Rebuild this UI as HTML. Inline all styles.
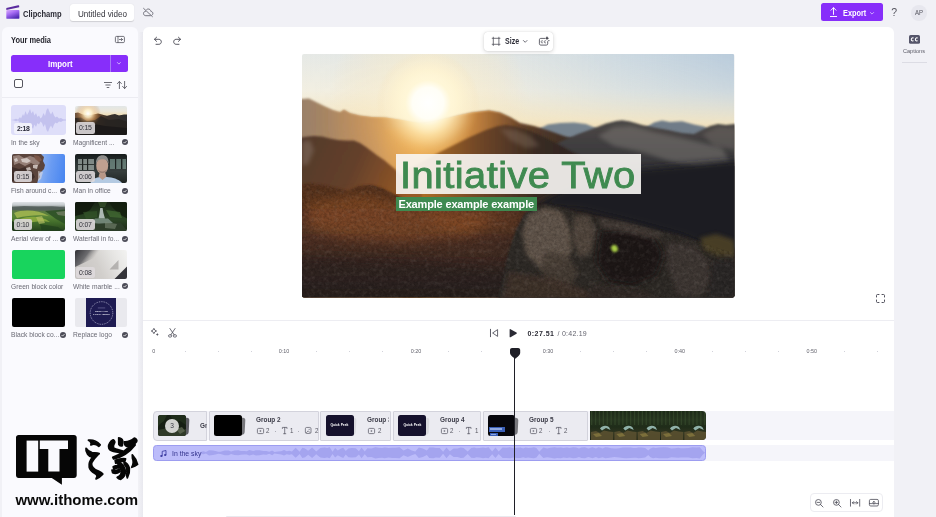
<!DOCTYPE html>
<html>
<head>
<meta charset="utf-8">
<title>Clipchamp</title>
<style>
*{box-sizing:border-box;margin:0;padding:0}
html,body{width:936px;height:517px;overflow:hidden}
body{will-change:transform;background:#f1f1f6;font-family:"Liberation Sans",sans-serif;color:#222;position:relative}
.abs{position:absolute}
.t{position:absolute;white-space:nowrap;line-height:1}
svg{position:absolute;overflow:visible}
/* panels */
#side{left:2px;top:26.5px;width:136px;height:495px;background:#fafafe;border-radius:6px 6px 0 0}
#main{left:143px;top:26.5px;width:751px;height:495px;background:#fff;border-radius:6px 6px 0 0}
/* top bar */
#title{left:70.4px;top:4px;width:63.8px;height:17.2px;background:#fff;border-radius:3px;box-shadow:0 .6px 1px rgba(0,0,0,.14)}
#export{left:820.8px;top:3.3px;width:62px;height:18.1px;background:#872efa;border-radius:2.5px}
#avatar{left:911px;top:5px;width:15.5px;height:15.5px;border-radius:50%;background:#e7e7ee}
/* import */
#import{left:11px;top:54.5px;width:117.1px;height:17.5px;background:#872efa;border-radius:2.5px}
#importdiv{left:110px;top:54.5px;width:1px;height:17.5px;background:#a77bf6}
#chk{left:14.4px;top:79.2px;width:9px;height:9.2px;border:1px solid #55555f;border-radius:2px;background:#fff}
#sdiv{left:2px;top:96.5px;width:135.5px;height:1px;background:#ececf2}
/* media */
.th{position:absolute;height:29.5px;border-radius:2px;overflow:hidden}
.lbl{position:absolute;white-space:nowrap;font-size:7.3px;line-height:1;color:#6a6a74}
.dur{position:absolute;left:1.4px;bottom:.7px;width:18.4px;height:11.6px;border-radius:2.2px;background:rgba(222,217,220,.9);font-size:6.9px;line-height:12px;color:#33333b;text-align:center;letter-spacing:-.15px}
.ck{position:absolute;width:6px;height:6px;border-radius:50%;background:#4c4c58}
</style>
</head>
<body>
<!-- ======= top bar ======= -->
<div class="abs" id="title"></div>
<div class="t" style="left:23.4px;top:9.7px;font-size:9px;font-weight:bold;color:#2b2b35;transform:scaleX(.84);transform-origin:0 0" id="brand">Clipchamp</div>
<div class="t" style="left:78px;top:9.5px;font-size:8.6px;color:#33333b;transform:scaleX(.94);transform-origin:0 0" id="utitle">Untitled video</div>
<div class="abs" id="export"></div>
<div class="t" style="left:842.7px;top:9.3px;font-size:9px;font-weight:bold;color:#fff;transform:scaleX(.815);transform-origin:0 0" id="exporttxt">Export</div>
<div class="t" style="left:891.2px;top:7.1px;font-size:10.5px;color:#55555f" id="help">?</div>
<div class="abs" id="avatar"></div>
<div class="t" style="left:914.9px;top:9.5px;font-size:6.8px;color:#55555f;transform:scaleX(.89);transform-origin:0 0" id="ap">AP</div>

<!-- ======= panels ======= -->
<div class="abs" style="left:138px;top:32px;width:5.5px;height:490px;background:linear-gradient(90deg,#f2f2f7,#e7e7ed)"></div>
<div class="abs" id="side"></div>
<div class="abs" id="main"></div>

<!-- ======= sidebar content ======= -->
<div class="t" style="left:11px;top:36.3px;font-size:8.6px;font-weight:bold;color:#26262e;transform:scaleX(.866);transform-origin:0 0" id="yourmedia">Your media</div>
<div class="abs" id="import"></div>
<div class="abs" id="importdiv"></div>
<div class="t" style="left:48.4px;top:59.6px;font-size:8.6px;font-weight:bold;color:#fff;transform:scaleX(.924);transform-origin:0 0" id="importtxt">Import</div>
<div class="abs" id="chk"></div>
<div class="abs" id="sdiv"></div>

<!-- ICONS-START -->
<svg style="left:5.6px;top:5px" width="14" height="14" viewBox="0 0 14 14"><defs><linearGradient id="lg1" x1="0" y1="0" x2=".6" y2="1"><stop offset="0" stop-color="#dcb0fa"/><stop offset=".45" stop-color="#a66cf4"/><stop offset="1" stop-color="#4f2bb4"/></linearGradient></defs><path d="M.3 3 L12.2 .3 C12.8 .2 13.2 .5 13.2 1 V2.2 L.3 5Z" fill="#5a2a9e"/><rect x=".3" y="4.9" width="13.1" height="8.9" rx=".9" fill="url(#lg1)"/></svg>
<svg style="left:143px;top:8px" width="10.4" height="9" viewBox="0 0 10.4 9"><path d="M2.6 3.2 C1.4 3.4 .5 4.3 .5 5.5 C.5 6.8 1.5 7.7 2.8 7.7 H7.4 M8.9 7.2 C9.6 6.8 9.9 6.1 9.9 5.5 C9.9 4.3 9 3.5 7.9 3.4 C7.7 2 6.6 1 5.2 1 C4.6 1 4.1 1.2 3.7 1.5" fill="none" stroke="#60606a" stroke-width=".85" stroke-linecap="round"/><path d="M.6 .4 L9.4 8.6" stroke="#60606a" stroke-width=".85" stroke-linecap="round"/></svg>
<svg style="left:830.2px;top:7.4px" width="7" height="10" viewBox="0 0 7 10"><path d="M3.5 7.4 V.8 M1 3.2 L3.5 .7 L6 3.2 M.4 9.5 H6.6" fill="none" stroke="#fff" stroke-width=".95" stroke-linecap="round" stroke-linejoin="round"/></svg>
<svg style="left:870.2px;top:11.6px" width="4" height="2.8" viewBox="0 0 4 2.8"><path d="M.4 .5 L2 2.1 3.6 .5" fill="none" stroke="#e4d4ff" stroke-width=".75" stroke-linecap="round" stroke-linejoin="round"/></svg>
<svg style="left:114.6px;top:36.2px" width="9.8" height="7" viewBox="0 0 9.8 7"><rect x=".4" y=".4" width="9" height="6.2" rx="1.1" fill="none" stroke="#50505a" stroke-width=".8"/><path d="M3 .4 V6.6 M4.4 3.5 H7.4 M6.3 2.3 L7.5 3.5 L6.3 4.7" fill="none" stroke="#50505a" stroke-width=".75" stroke-linecap="round" stroke-linejoin="round"/></svg>
<svg style="left:117.4px;top:62.4px" width="3.8" height="2.8" viewBox="0 0 3.8 2.8"><path d="M.4 .5 L1.9 2.1 3.4 .5" fill="none" stroke="#e4d4ff" stroke-width=".75" stroke-linecap="round" stroke-linejoin="round"/></svg>
<svg style="left:104.2px;top:81.6px" width="8" height="6" viewBox="0 0 8 6"><path d="M.4 .5 H7.6 M1.8 3 H6.2 M3.1 5.5 H4.9" fill="none" stroke="#50505a" stroke-width=".85" stroke-linecap="round"/></svg>
<svg style="left:117px;top:80.6px" width="10" height="8" viewBox="0 0 10 8"><path d="M2.4 7.6 V.6 M.4 2.6 L2.4 .5 L4.4 2.6 M7.6 .4 V7.4 M5.6 5.4 L7.6 7.5 L9.6 5.4" fill="none" stroke="#50505a" stroke-width=".85" stroke-linecap="round" stroke-linejoin="round"/></svg>
<!-- ICONS-END -->
<!-- MEDIA GRID -->
<div class="th" style="left:10.8px;top:104.89999999999999px;width:55.3px;height:29.9px;background:#dedef9;border-radius:3px"><svg width="55.5" height="30" viewBox="0 0 55.5 30"><path d="M0 15 L3 14.6 5 13.8 7 14.5 9 12 10 13.5 12 9 13 11 14.5 6 16 10 17.5 7.5 19 4 20.5 8.5 22 6 23.5 10.5 25 8 26.5 12 28 10.5 29.5 13.5 31 12 32.5 8 34 11 35.5 5 37 3 38.5 7 40 9.5 41.5 6.5 43 10.5 44.5 12.5 46 11.5 48 13.5 50 13 52 14.3 55.5 14.6 55.5 15.4 52 15.7 50 17 48 16.5 46 18.5 44.5 17.5 43 19.5 41.5 23.5 40 20.5 38.5 23 37 27 35.5 25 34 19 32.5 22 31 18 29.5 16.5 28 19.5 26.5 18 25 22 23.5 19.5 22 24 20.5 21.5 19 26 17.5 22.5 16 20 14.5 24 13 19 12 21 10 16.5 9 18 7 15.5 5 16.2 3 15.4 0 15Z" fill="#c3c2ee"/></svg>
<div class="dur" style="left:3.6px;bottom:.7px;width:17.7px;height:11.2px;background:#f1f1fb;font-weight:bold;color:#2b2b3a;letter-spacing:-.35px">2:18</div>
</div>
<div class="lbl" style="left:10.8px;top:138.7px;transform:scaleX(.915);transform-origin:0 0">In the sky</div>
<div class="ck" style="left:60px;top:139.2px"><svg width="6" height="6" viewBox="0 0 6 6"><path d="M1.6 3.1 L2.6 4.1 4.5 2.1" fill="none" stroke="#fff" stroke-width=".8"/></svg></div>
<div class="th" style="left:74.8px;top:105.5px;width:52.4px;height:29.2px;background:transparent;border-radius:2px"><div class="abs" style="inset:0;background:linear-gradient(180deg,#e2e6e7 0%,#ece8da 18%,#f0dfba 30%,#3a302a 42%,#1f1d1c 100%)"></div><svg width="53" height="30" viewBox="0 0 53 30"><defs><radialGradient id="ms" cx="13" cy="7.5" r="13" gradientUnits="userSpaceOnUse"><stop offset="0" stop-color="#fff" stop-opacity="1"/><stop offset=".3" stop-color="#fff0c8" stop-opacity=".85"/><stop offset=".65" stop-color="#e8b070" stop-opacity=".35"/><stop offset="1" stop-color="#a05a20" stop-opacity="0"/></radialGradient><linearGradient id="mm" x1="0" y1="0" x2="53" y2="0" gradientUnits="userSpaceOnUse"><stop offset="0" stop-color="#6a5240"/><stop offset=".3" stop-color="#8a5a2e"/><stop offset=".6" stop-color="#3a302a"/><stop offset="1" stop-color="#2c2c2e"/></linearGradient></defs><path d="M0 7 L3 6.5 8 8.5 13 9.5 18 8.5 23 7.5 27 8.5 32 10 37 8.6 40 8 44 9.5 49 8.4 53 8.6 53 30 0 30Z" fill="url(#mm)"/><path d="M0 12 L6 11.5 12 15 20 14 26 10 34 14 44 13 53 16 53 30 0 30Z" fill="#262220" opacity=".85"/><path d="M0 18 L14 17 30 20 53 22 53 30 0 30Z" fill="#1a1817" opacity=".85"/><rect width="53" height="30" fill="url(#ms)"/></svg>
<div class="dur">0:15</div>
</div>
<div class="lbl" style="left:73.1px;top:138.7px;transform:scaleX(.915);transform-origin:0 0">Magnificent ...</div>
<div class="ck" style="left:122.3px;top:139.2px"><svg width="6" height="6" viewBox="0 0 6 6"><path d="M1.6 3.1 L2.6 4.1 4.5 2.1" fill="none" stroke="#fff" stroke-width=".8"/></svg></div>
<div class="th" style="left:12.3px;top:153.79999999999998px;width:52.4px;height:29.2px;background:transparent;border-radius:2px"><div class="abs" style="inset:0;background:linear-gradient(100deg,#a9c2ea 0%,#9bbcf0 45%,#6b9cf2 70%,#4684f0 100%)"></div><svg width="53" height="30" viewBox="0 0 53 30"><path d="M0 0 L29 0 32 3 31 7 33 11 32 15 29 18 27 20 28 23 26 26 25 30 0 30Z" fill="#5b443c"/><path d="M1 2 L7 1 12 4 18 2 24 4 28 9 25 12 19 9 13 12 7 9 2 11Z" fill="#a48f86" opacity=".8"/><path d="M0 13 L7 15 13 13 20 17 23 23 19 27 10 25 4 28 0 27Z" fill="#3c2c28" opacity=".9"/><path d="M9 5 L15 4 19 7 15 9 10 8Z M2 5 L5 4 6 7 3 8Z M21 11 L26 11 25 15 21 14Z M14 14 L18 13 19 16 15 17Z" fill="#e4dcd8" opacity=".75"/><path d="M22 1 L27 2 30 6 27 8 23 5Z" fill="#7e5a4a" opacity=".9"/><path d="M26 17 L31 18 29 25 26 27Z" fill="#e6dfdc" opacity=".55"/><path d="M4 17 L9 18 8 22 4 21Z M14 20 L18 21 17 24 13 23Z" fill="#8a6a5c" opacity=".8"/></svg>
<div class="dur">0:15</div>
</div>
<div class="lbl" style="left:10.8px;top:187.0px;transform:scaleX(.915);transform-origin:0 0">Fish around c...</div>
<div class="ck" style="left:60px;top:187.5px"><svg width="6" height="6" viewBox="0 0 6 6"><path d="M1.6 3.1 L2.6 4.1 4.5 2.1" fill="none" stroke="#fff" stroke-width=".8"/></svg></div>
<div class="th" style="left:74.8px;top:153.79999999999998px;width:52.4px;height:29.2px;background:transparent;border-radius:2px"><div class="abs" style="inset:0;background:linear-gradient(180deg,#161b1b 0%,#2a3232 30%,#363d3c 60%,#202524 100%)"></div><svg width="53" height="30" viewBox="0 0 53 30"><rect x="3" y="5" width="16" height="11" fill="#b9c4c0" opacity=".6"/><rect x="7" y="5" width="1.2" height="11" fill="#1d2221"/><rect x="12" y="5" width="1.2" height="11" fill="#1d2221"/><rect x="3" y="10" width="16" height="1" fill="#1d2221" opacity=".8"/><rect x="35" y="5" width="16" height="10" fill="#8fb0a6" opacity=".55"/><rect x="40" y="5" width="1.2" height="10" fill="#1d2221"/><rect x="46" y="5" width="1.4" height="10" fill="#1d2221"/><path d="M15 30 C17 25 21 23.5 25 23 L32 23 C38 23.5 44 25 48 30Z" fill="#b4cae2"/><path d="M23.5 22.5 L27.5 26 31.5 22.5 30 18 25 18Z" fill="#b89888"/><ellipse cx="27.2" cy="11.8" rx="6" ry="8.2" fill="#c0a090"/><path d="M21 10.5 C20.6 3.2 24.2 1.2 27.5 1.2 C31.2 1.2 34 3.5 33.5 10.5 C33 6.8 31 5.2 27.4 5.2 C23.8 5.2 21.7 6.8 21 10.5Z" fill="#8e8d8b"/><path d="M22.8 15 C24.2 20.8 30.4 20.8 31.8 15 C30.6 18.2 24.2 18.2 22.8 15Z" fill="#9a8074"/></svg>
<div class="dur">0:06</div>
</div>
<div class="lbl" style="left:73.1px;top:187.0px;transform:scaleX(.915);transform-origin:0 0">Man in office</div>
<div class="ck" style="left:122.3px;top:187.5px"><svg width="6" height="6" viewBox="0 0 6 6"><path d="M1.6 3.1 L2.6 4.1 4.5 2.1" fill="none" stroke="#fff" stroke-width=".8"/></svg></div>
<div class="th" style="left:12.3px;top:201.79999999999998px;width:52.4px;height:29.2px;background:transparent;border-radius:2px"><div class="abs" style="inset:0;background:linear-gradient(180deg,#dfe2e6 0%,#c3c9cc 11%,#5c6660 20%,#5a7a44 32%,#588436 50%,#406a2a 72%,#27431e 100%)"></div><svg width="53" height="30" viewBox="0 0 53 30" style="filter:blur(.45px)"><path d="M0 5 L12 4 26 4.6 40 4.2 53 5.5 53 9 0 8Z" fill="#555f5c" opacity=".85"/><path d="M2 11 C12 7 26 8 37 14 C30 12.5 16 13 5 16Z" fill="#a5b850" opacity=".85"/><path d="M8 17 C18 13.5 30 14 38 20 C31 18.5 22 19 13 22Z" fill="#94b040" opacity=".8"/><path d="M24 15 L30 14 33 21 27 22Z" fill="#c2c46a" opacity=".6"/><path d="M0 19 L10 23 22 30 0 30Z" fill="#1d3518" opacity=".85"/><path d="M33 9 L53 7.5 53 22 44 17Z" fill="#2c4e26" opacity=".85"/><path d="M44 10 L53 9 53 14 46 13Z" fill="#8a8e7a" opacity=".6"/><path d="M28 22 L46 25 53 30 30 30Z" fill="#22401d" opacity=".75"/></svg>
<div class="dur">0:10</div>
</div>
<div class="lbl" style="left:10.8px;top:235.0px;transform:scaleX(.915);transform-origin:0 0">Aerial view of ...</div>
<div class="ck" style="left:60px;top:235.5px"><svg width="6" height="6" viewBox="0 0 6 6"><path d="M1.6 3.1 L2.6 4.1 4.5 2.1" fill="none" stroke="#fff" stroke-width=".8"/></svg></div>
<div class="th" style="left:74.8px;top:201.79999999999998px;width:52.4px;height:29.2px;background:transparent;border-radius:2px"><div class="abs" style="inset:0;background:linear-gradient(180deg,#172214 0%,#243a1e 35%,#2c4626 60%,#1c2818 100%)"></div><svg width="53" height="30" viewBox="0 0 53 30" style="filter:blur(.5px)"><path d="M0 0 L20 0 15 8 8 12 0 14Z" fill="#10180d" opacity=".85"/><path d="M34 0 L53 0 53 17 44 12 38 6Z" fill="#131d0e" opacity=".85"/><path d="M25.2 6 L27.6 6 28.4 11 30 16.5 23.6 16.5 24.6 11Z" fill="#c3cfcb" opacity=".85"/><path d="M20 16.5 L33 16.5 38 21 24 22 17 21Z" fill="#8fa39a" opacity=".7"/><path d="M8 22 L46 21 53 30 0 30Z" fill="#2f3f2b" opacity=".9"/><path d="M30 20 L42 22 40 27 30 26Z" fill="#7d8c78" opacity=".55"/><path d="M31 8 L45 10 47 16 35 15Z" fill="#477236" opacity=".65"/><path d="M8 10 L22 9 22 15 11 17Z" fill="#36582a" opacity=".6"/><path d="M23 0 L32 0 30 5 25 5Z" fill="#3e5a30" opacity=".6"/></svg>
<div class="dur">0:07</div>
</div>
<div class="lbl" style="left:73.1px;top:235.0px;transform:scaleX(.915);transform-origin:0 0">Waterfall in fo...</div>
<div class="ck" style="left:122.3px;top:235.5px"><svg width="6" height="6" viewBox="0 0 6 6"><path d="M1.6 3.1 L2.6 4.1 4.5 2.1" fill="none" stroke="#fff" stroke-width=".8"/></svg></div>
<div class="th" style="left:12.3px;top:249.7px;width:52.4px;height:29.2px;background:transparent;border-radius:2px"><div class="abs" style="inset:0;background:#18d45d"></div>
</div>
<div class="lbl" style="left:10.8px;top:282.9px;transform:scaleX(.915);transform-origin:0 0">Green block color</div>
<div class="th" style="left:74.8px;top:249.7px;width:52.4px;height:29.2px;background:transparent;border-radius:2px"><div class="abs" style="inset:0;background:linear-gradient(65deg,#c4c1bf 0%,#d2cfcc 45%,#e6e5e3 75%,#f3f3f2 100%)"></div><svg width="53" height="30" viewBox="0 0 53 30"><defs><linearGradient id="mb1" x1="0" y1="0" x2="16" y2="12" gradientUnits="userSpaceOnUse"><stop offset="0" stop-color="#2e2e33"/><stop offset=".6" stop-color="#5a5a5e" stop-opacity=".85"/><stop offset="1" stop-color="#9a9896" stop-opacity="0"/></linearGradient></defs><path d="M0 0 L36 0 0 17Z" fill="url(#mb1)" style="filter:blur(.6px)"/><path d="M53 15.5 L53 30 38.5 30Z" fill="#34343a" style="filter:blur(.5px)"/><path d="M34.5 19.5 L43.5 10 43.5 19.5Z" fill="#8f8c8a" opacity=".55" style="filter:blur(.5px)"/></svg>
<div class="dur">0:08</div>
</div>
<div class="lbl" style="left:73.1px;top:282.9px;transform:scaleX(.915);transform-origin:0 0">White marble ...</div>
<div class="ck" style="left:122.3px;top:283.4px"><svg width="6" height="6" viewBox="0 0 6 6"><path d="M1.6 3.1 L2.6 4.1 4.5 2.1" fill="none" stroke="#fff" stroke-width=".8"/></svg></div>
<div class="th" style="left:12.3px;top:297.9px;width:52.4px;height:29.2px;background:transparent;border-radius:2px"><div class="abs" style="inset:0;background:#000"></div>
</div>
<div class="lbl" style="left:10.8px;top:331.1px;transform:scaleX(.915);transform-origin:0 0">Black block co...</div>
<div class="ck" style="left:60px;top:331.6px"><svg width="6" height="6" viewBox="0 0 6 6"><path d="M1.6 3.1 L2.6 4.1 4.5 2.1" fill="none" stroke="#fff" stroke-width=".8"/></svg></div>
<div class="th" style="left:74.8px;top:297.9px;width:52.4px;height:29.2px;background:transparent;border-radius:2px"><div class="abs" style="inset:0;background:#e9e9ee"></div><div class="abs" style="left:11.5px;top:0;width:30px;height:30px;background:#1e1b52"></div><svg width="53" height="30" viewBox="0 0 53 30"><circle cx="26.5" cy="15" r="11.3" fill="none" stroke="#d8d8ee" stroke-width=".7" stroke-dasharray=".9 .9"/><text x="26.5" y="14.1" text-anchor="middle" font-family="Liberation Sans" font-weight="bold" font-size="2.5" fill="#f0f0fa" letter-spacing=".15">REPLACE</text><text x="26.5" y="17.3" text-anchor="middle" font-family="Liberation Sans" font-weight="bold" font-size="2.5" fill="#f0f0fa" letter-spacing=".1">LOGO HERE!</text><rect x="22.8" y="9.6" width="7.4" height=".7" fill="#6e6c9c"/></svg>
</div>
<div class="lbl" style="left:73.1px;top:331.1px;transform:scaleX(.915);transform-origin:0 0">Replace logo</div>
<div class="ck" style="left:122.3px;top:331.6px"><svg width="6" height="6" viewBox="0 0 6 6"><path d="M1.6 3.1 L2.6 4.1 4.5 2.1" fill="none" stroke="#fff" stroke-width=".8"/></svg></div>
<!-- MAIN CONTENT -->
<!-- PV-START -->
<svg id="pv" style="left:302px;top:54px" width="432.5" height="243.5" viewBox="0 0 432.5 243.5">
<defs>
<clipPath id="pvclip"><rect x="0" y="0" width="432.5" height="243.5" rx="2"/></clipPath>
<linearGradient id="sky" x1="0" y1="0" x2="0" y2="90" gradientUnits="userSpaceOnUse">
<stop offset="0" stop-color="#e6e9e6"/><stop offset=".4" stop-color="#f2efe2"/><stop offset=".72" stop-color="#f6e8c6"/><stop offset="1" stop-color="#f2d4a0"/>
</linearGradient>
<linearGradient id="skyblue" x1="0" y1="0" x2="1" y2="0">
<stop offset="0" stop-color="#c3d2de" stop-opacity="0"/><stop offset=".45" stop-color="#c9d6df" stop-opacity=".15"/><stop offset=".75" stop-color="#c3d3df" stop-opacity=".75"/><stop offset="1" stop-color="#b9cbdb" stop-opacity="1"/>
</linearGradient>
<linearGradient id="skyfade" x1="0" y1="0" x2="0" y2="1">
<stop offset="0" stop-color="#fff" stop-opacity="1"/><stop offset=".45" stop-color="#fff" stop-opacity=".7"/><stop offset="1" stop-color="#fff" stop-opacity="0"/>
</linearGradient>
<mask id="skym"><rect x="0" y="0" width="432.5" height="76" fill="url(#skyfade)"/></mask>
<radialGradient id="sun" cx="126" cy="47" r="100" gradientUnits="userSpaceOnUse">
<stop offset="0" stop-color="#ffffff" stop-opacity="1"/><stop offset=".19" stop-color="#fffdf0" stop-opacity="1"/><stop offset=".3" stop-color="#fef6d8" stop-opacity=".9"/><stop offset=".5" stop-color="#fbedc8" stop-opacity=".45"/><stop offset="1" stop-color="#f8e0b0" stop-opacity="0"/>
</radialGradient>
<radialGradient id="bloom" cx="126" cy="49" r="52" gradientUnits="userSpaceOnUse"><stop offset="0" stop-color="#ffffff" stop-opacity="1"/><stop offset=".3" stop-color="#fffef6" stop-opacity="1"/><stop offset=".44" stop-color="#fff6d4" stop-opacity=".85"/><stop offset=".62" stop-color="#fff2cc" stop-opacity=".45"/><stop offset=".82" stop-color="#fdeac0" stop-opacity=".14"/><stop offset="1" stop-color="#f8c070" stop-opacity="0"/></radialGradient>
<radialGradient id="haze" cx="126" cy="64" r="120" gradientUnits="userSpaceOnUse">
<stop offset="0" stop-color="#fff2c8" stop-opacity="1"/><stop offset=".14" stop-color="#fbd07c" stop-opacity=".9"/><stop offset=".4" stop-color="#e6a04c" stop-opacity=".48"/><stop offset=".75" stop-color="#c07030" stop-opacity=".14"/><stop offset="1" stop-color="#803a10" stop-opacity="0"/>
</radialGradient>
<linearGradient id="farL" x1="0" y1="0" x2="130" y2="0" gradientUnits="userSpaceOnUse"><stop offset="0" stop-color="#9a8068"/><stop offset=".5" stop-color="#bf9a6e"/><stop offset="1" stop-color="#ecc07a"/></linearGradient>
<linearGradient id="midR" x1="76" y1="0" x2="290" y2="0" gradientUnits="userSpaceOnUse"><stop offset="0" stop-color="#e8aa52" stop-opacity="0"/><stop offset=".2" stop-color="#e8aa52" stop-opacity="1"/><stop offset=".42" stop-color="#a96c32"/><stop offset=".68" stop-color="#573d2b"/><stop offset="1" stop-color="#332925"/></linearGradient>
<linearGradient id="nearR" x1="100" y1="0" x2="320" y2="0" gradientUnits="userSpaceOnUse"><stop offset="0" stop-color="#c47c26"/><stop offset=".35" stop-color="#704626"/><stop offset=".62" stop-color="#382a24"/><stop offset="1" stop-color="#262223"/></linearGradient>
<linearGradient id="nearL" x1="0" y1="80" x2="110" y2="130" gradientUnits="userSpaceOnUse"><stop offset="0" stop-color="#523a2d"/><stop offset=".5" stop-color="#64402b"/><stop offset="1" stop-color="#985a26"/></linearGradient>
<linearGradient id="darkM" x1="0" y1="66" x2="0" y2="170" gradientUnits="userSpaceOnUse"><stop offset="0" stop-color="#4c4847"/><stop offset=".35" stop-color="#3b3a3c"/><stop offset=".7" stop-color="#262629"/><stop offset="1" stop-color="#1f1f23"/></linearGradient>
<linearGradient id="fg" x1="0" y1="128" x2="0" y2="243" gradientUnits="userSpaceOnUse"><stop offset="0" stop-color="#56301f"/><stop offset=".3" stop-color="#583220"/><stop offset=".7" stop-color="#422c22"/><stop offset="1" stop-color="#2e231f"/></linearGradient>
<linearGradient id="fgdark" x1="0" y1="0" x2="432" y2="0" gradientUnits="userSpaceOnUse"><stop offset="0" stop-color="#201c1c" stop-opacity="0"/><stop offset=".42" stop-color="#201c1c" stop-opacity=".1"/><stop offset=".6" stop-color="#1d1b1c" stop-opacity=".55"/><stop offset="1" stop-color="#1a1a1d" stop-opacity=".8"/></linearGradient>
<clipPath id="mtclip"><path d="M-20 45 L0 45 7 44.5 14 48 22 52 31 56 38 58 42 55.5 48 59 58 61.5 70 63 84 63.5 100 66 116 69 140 70 140 270 -20 270Z"/><path d="M96 74 L108 72 124 69 140 65.5 156 61.5 170 58.5 187 56.6 198 58.5 208 63 218 69 232 72 248 77 262 82 290 90 290 270 96 270Z"/></clipPath>
<clipPath id="fgclip"><path d="M-20 130 L0 130 10 129.5 22 131 34 134 46 137 52 134 56 132.3 62 131.5 70 131 80 134 92 140 104 146 120 150 140 152 160 150 180 148 200 150 222 152 236 150 262 138 290 130 330 120 460 110 460 270 -20 270Z"/></clipPath>
<clipPath id="grclip"><path d="M-20 130 L0 130 10 129.5 22 131 34 134 46 137 52 134 56 132.3 62 131.5 70 131 80 134 92 140 104 146 120 150 140 152 160 150 180 148 200 150 222 152 232 153 242 150 256 152 268 156 282 160 296 163 312 166 330 170 350 175 372 180 392 186 410 192 460 208 460 270 -20 270Z"/></clipPath>
<filter id="b1" x="-5%" y="-20%" width="110%" height="140%"><feGaussianBlur stdDeviation=".8"/></filter>
<filter id="b2" x="-30%" y="-30%" width="160%" height="160%"><feGaussianBlur stdDeviation="2.2"/></filter>
<filter id="b3" x="-30%" y="-30%" width="160%" height="160%"><feGaussianBlur stdDeviation="3.5"/></filter>
<filter id="b4" x="-30%" y="-30%" width="160%" height="160%"><feGaussianBlur stdDeviation="6"/></filter>
<filter id="grain" x="0" y="0" width="100%" height="100%"><feTurbulence type="fractalNoise" baseFrequency=".4" numOctaves="3" seed="7" result="n"/><feColorMatrix in="n" type="matrix" values="0 0 0 0 0  0 0 0 0 0  0 0 0 0 0  1.6 0 0 0 -.6"/></filter>
<filter id="grainL" x="0" y="0" width="100%" height="100%"><feTurbulence type="fractalNoise" baseFrequency=".22" numOctaves="3" seed="11" result="n"/><feColorMatrix in="n" type="matrix" values="0 0 0 0 1  0 0 0 0 .93  0 0 0 0 .85  1.7 0 0 0 -.78"/></filter>
</defs>
<g clip-path="url(#pvclip)">
<rect width="432.5" height="243.5" fill="url(#sky)"/>
<rect width="432.5" height="76" fill="url(#skyblue)" mask="url(#skym)"/>
<rect width="432.5" height="243.5" fill="url(#sun)"/>
<!-- far left range -->
<path filter="url(#b1)" d="M-20 45 L0 45 7 44.5 14 48 22 52 31 56 38 58 42 55.5 48 59 58 61.5 70 63 84 63.5 100 66 116 69 140 70 140 270 -20 270Z" fill="url(#farL)"/>
<!-- distant blue mountains right -->
<path filter="url(#b1)" d="M230 78 L246 70.5 258 69 272 68.5 284 70 294 74 310 84 310 270 230 270Z" fill="#76838e"/>
<path filter="url(#b1)" d="M336 78 L352 68.5 360 66.6 368 68 380 67.2 392 70.5 402 72.5 414 80 414 270 336 270Z" fill="#6f7c88"/>
<!-- mid mountain right of sun -->
<path filter="url(#b1)" d="M70 76 L96 74 108 72 124 69 140 65.5 156 61.5 170 58.5 187 56.6 198 58.5 208 63 218 69 232 72 248 77 262 82 290 90 290 270 70 270Z" fill="url(#midR)"/>
<!-- haze glow over far mountains -->
<g clip-path="url(#mtclip)"><rect width="432.5" height="243.5" fill="url(#haze)" filter="url(#b1)"/></g>
<rect width="432.5" height="243.5" fill="url(#bloom)"/>
<!-- big dark mountain -->
<path filter="url(#b1)" d="M250 92 L262 86 276 80 290 75 304 69.5 314 67 320 66.2 328 67.5 340 71 352 73.5 366 76 380 79 392 80 400 76 408 72 416 70 424 71 432.5 70 460 70 460 270 250 270Z" fill="url(#darkM)"/>
<path filter="url(#b2)" d="M296 82 L312 73 330 72 352 78 380 84 420 94 428 108 400 114 370 108 340 98 312 92Z" fill="#8a8680" opacity=".42"/>
<path filter="url(#b2)" d="M400 80 L416 73 434 74 434 96 412 92Z" fill="#7b756e" opacity=".4"/>
<!-- nearer mountain right -->
<path filter="url(#b1)" d="M100 118 L120 108 138 98 152 91 168 83 184 76 196 72 204 71 214 72.5 226 76 240 82 254 89 270 98 290 108 320 122 320 270 100 270Z" fill="url(#nearR)"/>
<path filter="url(#b2)" d="M198 75 L214 76 228 82 238 92 224 94 208 86Z" fill="#8f7a6a" opacity=".35"/>
<!-- near-left mountain -->
<path filter="url(#b1)" d="M-20 84 L0 83.5 6 82.5 12 82 20 82.6 28 84.5 36 86 44 86.4 52 86.6 58 89 64 93 70 97.5 76 102 82 106 88 111 94 116 100 122 120 140 120 270 -20 270Z" fill="url(#nearL)"/>
<path filter="url(#b2)" d="M0 88 L8 86 12 96 6 110 0 112Z" fill="#8d7a6e" opacity=".45"/>
<!-- foreground -->
<path filter="url(#b1)" d="M-20 130 L0 130 10 129.5 22 131 34 134 46 137 52 134 56 132.3 62 131.5 70 131 80 134 92 140 104 146 120 150 140 152 160 150 180 148 200 150 222 152 240 151 460 200 460 270 -20 270Z" fill="url(#fg)"/>
<path filter="url(#b4)" d="M6 148 L60 140 110 150 150 158 190 160 170 182 100 188 40 184 6 174Z" fill="#b4642a" opacity=".38"/>
<path filter="url(#b4)" d="M120 152 L200 152 244 162 210 180 140 176Z" fill="#a85c26" opacity=".3"/>
<path filter="url(#b4)" d="M-10 200 L120 206 220 214 220 260 -10 260Z" fill="#241c1a" opacity=".5"/>
<g clip-path="url(#fgclip)"><rect x="0" y="100" width="432.5" height="150" fill="url(#fgdark)"/></g>
<!-- upper-right dark hillside behind rocks -->
<path filter="url(#b3)" d="M230 152 L262 136 290 126 330 116 460 104 460 215 382 182 330 168 280 156Z" fill="#1f1f23"/>
<!-- rocks -->
<path filter="url(#b1)" d="M222 160 L232 153 242 150 256 152 268 156 282 160 296 163 312 166 330 170 350 175 372 180 392 186 410 192 460 208 460 270 190 270 206 200 214 176Z" fill="#2e2926"/>
<path filter="url(#b2)" d="M226 160 L244 153 260 158 268 174 270 196 262 214 240 216 224 200 220 178Z" fill="#63564b" opacity=".95"/>
<path filter="url(#b2)" d="M272 162 L286 161 294 176 290 198 278 204 270 186Z" fill="#54493f" opacity=".9"/>
<path filter="url(#b2)" d="M244 198 L266 202 276 218 268 234 248 232 238 214Z" fill="#463c35" opacity=".9"/>
<path filter="url(#b3)" d="M298 176 L330 174 354 184 362 200 354 222 330 232 306 228 294 208Z" fill="#1a1817" opacity=".9"/>
<path filter="url(#b2)" d="M296 164 L330 170 356 178 362 186 330 180 300 174Z" fill="#4a413a" opacity=".8"/>
<path filter="url(#b2)" d="M364 188 L392 192 406 206 410 228 396 243 376 240 366 214Z" fill="#403935" opacity=".9"/>
<path filter="url(#b2)" d="M398 184 L414 180 432 186 434 202 416 202 402 196Z" fill="#4e4228" opacity=".9"/>
<path filter="url(#b2)" d="M410 208 L434 206 434 243 406 243Z" fill="#2a2725" opacity=".9"/>
<path filter="url(#b2)" d="M206 218 L250 224 284 236 304 250 200 250Z" fill="#40322a" opacity=".9"/>
<path filter="url(#b2)" d="M290 228 L340 236 370 250 284 250Z" fill="#332c28" opacity=".9"/>
<!-- grain -->
<g clip-path="url(#grclip)"><rect x="0" y="100" width="432.5" height="144" filter="url(#grain)" opacity=".26"/><rect x="0" y="100" width="432.5" height="144" filter="url(#grainL)" opacity=".1"/></g>
<!-- lens flare -->
<ellipse cx="312.5" cy="194.5" rx="3.2" ry="3.8" fill="#b9e24e" filter="url(#b1)" opacity=".9" transform="rotate(-30 312.5 194.5)"/>
</g>
</svg>
<!-- PV-END -->
<!-- MAIN-REST -->
<!-- undo / redo -->
<svg style="left:153.5px;top:36.5px" width="8" height="8" viewBox="0 0 8 8"><path d="M2.6 .2 L.4 2.3 L2.6 4.4 M.6 2.3 L4.9 2.3 C8.1 2.3 8.1 7.3 4.9 7.3 L2 7.3" fill="none" stroke="#50505a" stroke-width=".95" stroke-linecap="round" stroke-linejoin="round"/></svg>
<svg style="left:173.2px;top:36.5px" width="8" height="8" viewBox="0 0 8 8"><path d="M5.4 .2 L7.6 2.3 L5.4 4.4 M7.4 2.3 L3.1 2.3 C-.1 2.3 -.1 7.3 3.1 7.3 L6 7.3" fill="none" stroke="#50505a" stroke-width=".95" stroke-linecap="round" stroke-linejoin="round"/></svg>
<!-- floating toolbar -->
<div class="abs" style="left:484px;top:31.6px;width:69px;height:19px;background:#fff;border-radius:3.5px;box-shadow:0 1px 4px rgba(0,0,0,.16),0 0 1px rgba(0,0,0,.18)"></div>
<svg style="left:491.8px;top:36.9px" width="8.2" height="8.7" viewBox="0 0 8.2 8.7"><path d="M1.3 .2 V8.5 M6.9 .2 V8.5 M.2 1.3 H8 M.2 7.3 H8" fill="none" stroke="#50505a" stroke-width=".8" stroke-linecap="round"/></svg>
<div class="t" id="sizetxt" style="left:505px;top:37.4px;font-size:8.4px;font-weight:bold;color:#2e2e38;transform:scaleX(.84);transform-origin:0 0">Size</div>
<svg style="left:523px;top:40.3px" width="4.4" height="3" viewBox="0 0 4.4 3"><path d="M.4 .5 L2.2 2.3 4 .5" fill="none" stroke="#4a4a55" stroke-width=".8" stroke-linecap="round" stroke-linejoin="round"/></svg>
<svg style="left:538.8px;top:35.5px" width="10.5" height="9.6" viewBox="0 0 10.5 9.6"><path d="M6 2.4 H1.7 C.9 2.4 .4 2.9 .4 3.7 V7.8 C.4 8.6 .9 9.1 1.7 9.1 H7.4 C8.2 9.1 8.7 8.6 8.7 7.8 V5.2" fill="none" stroke="#4a4a55" stroke-width=".85"/><path d="M3.9 5 C3.2 4.4 2.1 4.8 2.1 5.8 C2.1 6.8 3.2 7.2 3.9 6.6 M7 5 C6.3 4.4 5.2 4.8 5.2 5.8 C5.2 6.8 6.3 7.2 7 6.6" fill="none" stroke="#4a4a55" stroke-width=".75"/><path d="M8 0 L8.6 1.6 L10.2 2.2 L8.6 2.8 L8 4.4 L7.4 2.8 L5.8 2.2 L7.4 1.6Z" fill="#2e2e38"/><circle cx="9.9" cy="4.6" r=".6" fill="#2e2e38"/></svg>
<!-- title overlays -->
<div class="abs" style="left:395.5px;top:154.2px;width:245.5px;height:39.6px;background:rgba(248,246,243,.91)"></div>
<div class="t" id="ttl" style="left:399.5px;top:157.2px;font-size:37.6px;color:#3f8a50;letter-spacing:.4px;-webkit-text-stroke:.9px #3f8a50;transform:scaleX(1.06);transform-origin:0 0">Initiative Two</div>
<div class="abs" style="left:395.6px;top:196.8px;width:141.6px;height:14.6px;background:#3f8a50"></div>
<div class="t" id="sub" style="left:398.5px;top:198.6px;font-size:11px;font-weight:bold;color:#fff;letter-spacing:-.17px">Example example example</div>
<!-- fullscreen -->
<svg style="left:875.5px;top:293.7px" width="9" height="9" viewBox="0 0 9 9"><path d="M.5 3 V1.4 C.5 .9 .9 .5 1.4 .5 H3 M6 .5 H7.6 C8.1 .5 8.5 .9 8.5 1.4 V3 M8.5 6 V7.6 C8.5 8.1 8.1 8.5 7.6 8.5 H6 M3 8.5 H1.4 C.9 8.5 .5 8.1 .5 7.6 V6" fill="none" stroke="#4a4a55" stroke-width=".95" stroke-linecap="round"/></svg>
<!-- divider between preview & timeline -->
<div class="abs" style="left:143px;top:320.2px;width:751px;height:1px;background:#ededf2"></div>
<!-- right rail -->
<svg style="left:909px;top:34.9px" width="11" height="8.8" viewBox="0 0 11 8.8"><rect x="0" y="0" width="11" height="8.8" rx="1.6" fill="#55556a"/><path d="M4.6 3.2 C3.8 2.5 2.3 2.9 2.3 4.4 C2.3 5.9 3.8 6.3 4.6 5.6 M8.7 3.2 C7.9 2.5 6.4 2.9 6.4 4.4 C6.4 5.9 7.9 6.3 8.7 5.6" fill="none" stroke="#fff" stroke-width="1.05"/></svg>
<div class="t" id="cap" style="left:903.4px;top:47.6px;font-size:6px;color:#5a5a66;transform:scaleX(.925);transform-origin:0 0">Captions</div>
<div class="abs" style="left:902px;top:61.8px;width:24.5px;height:1px;background:#dcdce4"></div>
<!-- TIMELINE -->
<style>
.rl{font-size:5.4px;color:#62626c}
.tk{top:350.6px;width:1px;height:1.2px;background:#c6c6d0;border-radius:50%}
.clip{top:411.1px;height:29.5px;background:#ebebf1;border:1px solid #d3d3dc}
.gt{font-size:6.7px;font-weight:bold;color:#3a3a46;transform:scaleX(.96);transform-origin:0 0}
.gn{font-size:6.7px;color:#55555f;transform:scaleX(.92);transform-origin:0 0}
.qp{top:415.3px;width:28.4px;height:20.8px;border-radius:2.5px;background:#15112c;color:#fff;font-size:3.5px;font-weight:bold;text-align:center;line-height:20.8px;white-space:nowrap}
.qp span{display:inline-block;transform:scaleX(.95)}
</style>
<svg style="left:150.6px;top:328.4px" width="9" height="9" viewBox="0 0 9 9"><path d="M2.9 .3 L3.8 2.1 L5.6 3 L3.8 3.9 L2.9 5.7 L2 3.9 L.2 3 L2 2.1Z" fill="none" stroke="#4a4a55" stroke-width=".8" stroke-linejoin="round"/><path d="M6.3 4.9 L6.8 5.9 L7.8 6.4 L6.8 6.9 L6.3 7.9 L5.8 6.9 L4.8 6.4 L5.8 5.9Z" fill="#5a5a64"/></svg>
<svg style="left:168.2px;top:327.6px" width="9" height="10" viewBox="0 0 9 10"><path d="M1.9 .5 L6.3 7 M7.1 .5 L2.7 7" fill="none" stroke="#4a4a55" stroke-width=".8" stroke-linecap="round"/><ellipse cx="2.1" cy="7.9" rx="1.65" ry="1.25" fill="none" stroke="#4a4a55" stroke-width=".75"/><ellipse cx="6.9" cy="7.9" rx="1.65" ry="1.25" fill="none" stroke="#4a4a55" stroke-width=".75"/></svg>
<svg style="left:490px;top:328.6px" width="8.2" height="8" viewBox="0 0 8.2 8"><path d="M.5 .3 V7.7" stroke="#4a4a55" stroke-width=".9" fill="none" stroke-linecap="round"/><path d="M7.6 .6 L2.6 4 L7.6 7.4Z" fill="none" stroke="#4a4a55" stroke-width=".85" stroke-linejoin="round"/></svg>
<svg style="left:509.2px;top:328.5px" width="8.2" height="8.4" viewBox="0 0 8.2 8.4"><path d="M.6 .7 C.6 .2 1.1 0 1.5 .2 L7.5 3.6 C7.9 3.85 7.9 4.55 7.5 4.8 L1.5 8.2 C1.1 8.4 .6 8.2 .6 7.7Z" fill="#2a2a34"/></svg>
<div class="t" id="tc1" style="left:527.4px;top:329.6px;font-size:7px;font-weight:bold;color:#2b2b35;letter-spacing:.46px">0:27.51</div>
<div class="t" id="tc2" style="left:557.6px;top:329.6px;font-size:7px;color:#63636e;letter-spacing:.24px">/ 0:42.19</div>
<div class="t rl" style="left:152.2px;top:349.3px">0</div>
<div class="t rl" style="left:273.9px;top:349.3px;width:20px;text-align:center">0:10</div>
<div class="t rl" style="left:405.9px;top:349.3px;width:20px;text-align:center">0:20</div>
<div class="t rl" style="left:537.9px;top:349.3px;width:20px;text-align:center">0:30</div>
<div class="t rl" style="left:669.8px;top:349.3px;width:20px;text-align:center">0:40</div>
<div class="t rl" style="left:801.8px;top:349.3px;width:20px;text-align:center">0:50</div>
<div class="abs tk" style="left:184.5px"></div>
<div class="abs tk" style="left:217.5px"></div>
<div class="abs tk" style="left:250.5px"></div>
<div class="abs tk" style="left:316.4px"></div>
<div class="abs tk" style="left:349.4px"></div>
<div class="abs tk" style="left:382.4px"></div>
<div class="abs tk" style="left:448.4px"></div>
<div class="abs tk" style="left:481.4px"></div>
<div class="abs tk" style="left:514.4px"></div>
<div class="abs tk" style="left:580.3px"></div>
<div class="abs tk" style="left:613.3px"></div>
<div class="abs tk" style="left:646.3px"></div>
<div class="abs tk" style="left:712.3px"></div>
<div class="abs tk" style="left:745.3px"></div>
<div class="abs tk" style="left:778.3px"></div>
<div class="abs tk" style="left:844.2px"></div>
<div class="abs tk" style="left:877.2px"></div>
<div class="abs" style="left:154px;top:411.2px;width:740px;height:29.3px;background:#f5f5fa"></div>
<div class="abs" style="left:154px;top:444.5px;width:740px;height:16.6px;background:#f5f5fa"></div>
<div class="abs clip" style="left:153.2px;width:53.4px;border-radius:4px 0 0 4px"></div>
<div class="abs" style="left:159.6px;top:417px;width:28.6px;height:17.4px;background:#5c5c62;border-radius:2.5px;transform:rotate(3deg)"></div>
<div class="abs" style="left:158px;top:415.2px;width:28.4px;height:21px;border-radius:2.5px;overflow:hidden;background:#161f13"><svg width="28.4" height="21" viewBox="0 0 28.4 21"><path d="M0 0 L9 0 6 6 2 9 0 12Z" fill="#24331e"/><path d="M12 0 L28 0 28 10 22 6 16 7Z" fill="#1f2c1a"/><path d="M0 15 L10 13 18 16 28 14 28 21 0 21Z" fill="#2f3a28"/><path d="M18 14 L24 12 27 16 22 19Z" fill="#67705a" opacity=".7"/></svg></div>
<div class="abs" style="left:165px;top:418.9px;width:13.8px;height:13.8px;border-radius:50%;background:rgba(226,226,224,.92)"></div>
<div class="t" style="left:170.3px;top:422.6px;font-size:6.6px;color:#3a3a44">3</div>
<div class="t gt" style="left:199.8px;top:423.1px;width:7px;overflow:hidden">Group 1</div>
<div class="abs clip" style="left:209.2px;width:109.4px;border-radius:1px"></div>
<div class="abs" style="left:215.5px;top:417px;width:28.6px;height:17.4px;background:#77777c;border-radius:2.5px;transform:rotate(3deg)"></div>
<div class="abs" style="left:213.9px;top:415.2px;width:28.6px;height:21px;border-radius:2.5px;background:#000"></div>
<div class="t gt" style="left:255.7px;top:417.4px">Group 2</div>
<svg style="left:257.1px;top:427.9px" width="7" height="6" viewBox="0 0 7 6"><rect x=".4" y=".4" width="6.2" height="5.2" rx="1.2" fill="none" stroke="#5a5a66" stroke-width=".75"/><path d="M2.8 1.9 L4.6 3 L2.8 4.1Z" fill="#5a5a66"/></svg>
<div class="t gn" style="left:266.1px;top:428px">2</div>
<div class="abs" style="left:274.5px;top:431px;width:1px;height:1px;background:#9a9aa4;border-radius:50%"></div>
<svg style="left:282.2px;top:427.3px" width="5.4" height="7.1" viewBox="0 0 5.4 7.1"><path d="M.4 1.5 V.4 H5 V1.5 M2.7 .4 V6.7 M1.6 6.7 H3.8" fill="none" stroke="#5a5a66" stroke-width=".75" stroke-linecap="round" stroke-linejoin="round"/></svg>
<div class="t gn" style="left:290.2px;top:428px">1</div>
<div class="abs" style="left:298.3px;top:431px;width:1px;height:1px;background:#9a9aa4;border-radius:50%"></div>
<svg style="left:305.2px;top:427.4px" width="6.4" height="6.9" viewBox="0 0 6.6 7"><rect x=".4" y=".4" width="5.8" height="6.2" rx="1.3" fill="none" stroke="#5a5a66" stroke-width=".75"/><path d="M1.2 6 L3.3 3.9 L5.4 6" fill="none" stroke="#5a5a66" stroke-width=".7"/><circle cx="4.3" cy="2.3" r=".55" fill="#5a5a66"/></svg>
<div class="t gn" style="left:314.5px;top:428px">2</div>
<div class="abs clip" style="left:320.4px;width:70.8px;border-radius:1px"></div>
<div class="abs" style="left:327.20000000000005px;top:417px;width:28.6px;height:17.4px;background:#d9d9de;border-radius:2.5px;transform:rotate(3deg)"></div>
<div class="abs qp" style="left:325.6px"><span>Quick Peek</span></div>
<div class="t gt" style="left:367.4px;top:417.4px;width:23.4px;overflow:hidden">Group 3</div>
<svg style="left:368.4px;top:427.9px" width="7" height="6" viewBox="0 0 7 6"><rect x=".4" y=".4" width="6.2" height="5.2" rx="1.2" fill="none" stroke="#5a5a66" stroke-width=".75"/><path d="M2.8 1.9 L4.6 3 L2.8 4.1Z" fill="#5a5a66"/></svg>
<div class="t gn" style="left:377.8px;top:428px">2</div>
<div class="abs clip" style="left:393.4px;width:87.2px;border-radius:1px"></div>
<div class="abs" style="left:399.5px;top:417px;width:28.6px;height:17.4px;background:#d9d9de;border-radius:2.5px;transform:rotate(3deg)"></div>
<div class="abs qp" style="left:397.9px"><span>Quick Peek</span></div>
<div class="t gt" style="left:440px;top:417.4px">Group 4</div>
<svg style="left:441px;top:427.9px" width="7" height="6" viewBox="0 0 7 6"><rect x=".4" y=".4" width="6.2" height="5.2" rx="1.2" fill="none" stroke="#5a5a66" stroke-width=".75"/><path d="M2.8 1.9 L4.6 3 L2.8 4.1Z" fill="#5a5a66"/></svg>
<div class="t gn" style="left:450.1px;top:428px">2</div>
<div class="abs" style="left:458.8px;top:431px;width:1px;height:1px;background:#9a9aa4;border-radius:50%"></div>
<svg style="left:466.2px;top:427.3px" width="5.4" height="7.1" viewBox="0 0 5.4 7.1"><path d="M.4 1.5 V.4 H5 V1.5 M2.7 .4 V6.7 M1.6 6.7 H3.8" fill="none" stroke="#5a5a66" stroke-width=".75" stroke-linecap="round" stroke-linejoin="round"/></svg>
<div class="t gn" style="left:474.6px;top:428px">1</div>
<div class="abs clip" style="left:482.6px;width:105.2px;border-radius:1px"></div>
<div class="abs" style="left:489.40000000000003px;top:417px;width:28.6px;height:17.4px;background:#77777d;border-radius:2.5px;transform:rotate(3deg)"></div>
<div class="abs" style="left:487.8px;top:415.2px;width:26.8px;height:21px;border-radius:2.5px;background:#06060c;overflow:hidden"><div class="abs" style="left:1.2px;top:11.6px;width:16px;height:5.2px;background:#3a5fb8"></div><div class="abs" style="left:2.2px;top:12.8px;width:12px;height:2.4px;background:#9fb6ea;opacity:.85"></div><div class="abs" style="left:2px;top:17.6px;width:8px;height:3.4px;background:#3a5fb8"></div><div class="abs" style="left:3px;top:18.4px;width:5px;height:1.6px;background:#9fb6ea;opacity:.8"></div></div>
<div class="t gt" style="left:529.2px;top:417.4px">Group 5</div>
<svg style="left:530.3px;top:427.9px" width="7" height="6" viewBox="0 0 7 6"><rect x=".4" y=".4" width="6.2" height="5.2" rx="1.2" fill="none" stroke="#5a5a66" stroke-width=".75"/><path d="M2.8 1.9 L4.6 3 L2.8 4.1Z" fill="#5a5a66"/></svg>
<div class="t gn" style="left:539.2px;top:428px">2</div>
<div class="abs" style="left:548.5px;top:431px;width:1px;height:1px;background:#9a9aa4;border-radius:50%"></div>
<svg style="left:556px;top:427.3px" width="5.4" height="7.1" viewBox="0 0 5.4 7.1"><path d="M.4 1.5 V.4 H5 V1.5 M2.7 .4 V6.7 M1.6 6.7 H3.8" fill="none" stroke="#5a5a66" stroke-width=".75" stroke-linecap="round" stroke-linejoin="round"/></svg>
<div class="t gn" style="left:564.4px;top:428px">2</div>
<div class="abs" style="left:589.8px;top:411.2px;width:116.6px;height:29px;border-radius:0 4px 4px 0;overflow:hidden;background:linear-gradient(180deg,#1d2a18 0%,#26351f 30%,#1f2c19 55%,#2e3420 75%,#1c2214 100%)"><svg width="116.6" height="29" viewBox="0 0 116.6 29"><rect x="1.0" y="0" width="1.3" height="14" fill="#3c5232" opacity=".55"/><rect x="4.9" y="0" width="1.3" height="14" fill="#3c5232" opacity=".55"/><rect x="8.8" y="0" width="1.3" height="14" fill="#3c5232" opacity=".55"/><rect x="12.7" y="0" width="1.3" height="14" fill="#3c5232" opacity=".55"/><rect x="16.6" y="0" width="1.3" height="14" fill="#3c5232" opacity=".55"/><rect x="20.5" y="0" width="1.3" height="14" fill="#3c5232" opacity=".55"/><rect x="24.4" y="0" width="1.3" height="14" fill="#3c5232" opacity=".55"/><rect x="28.3" y="0" width="1.3" height="14" fill="#3c5232" opacity=".55"/><rect x="32.2" y="0" width="1.3" height="14" fill="#3c5232" opacity=".55"/><rect x="36.1" y="0" width="1.3" height="14" fill="#3c5232" opacity=".55"/><rect x="40.0" y="0" width="1.3" height="14" fill="#3c5232" opacity=".55"/><rect x="43.9" y="0" width="1.3" height="14" fill="#3c5232" opacity=".55"/><rect x="47.8" y="0" width="1.3" height="14" fill="#3c5232" opacity=".55"/><rect x="51.7" y="0" width="1.3" height="14" fill="#3c5232" opacity=".55"/><rect x="55.6" y="0" width="1.3" height="14" fill="#3c5232" opacity=".55"/><rect x="59.5" y="0" width="1.3" height="14" fill="#3c5232" opacity=".55"/><rect x="63.4" y="0" width="1.3" height="14" fill="#3c5232" opacity=".55"/><rect x="67.3" y="0" width="1.3" height="14" fill="#3c5232" opacity=".55"/><rect x="71.2" y="0" width="1.3" height="14" fill="#3c5232" opacity=".55"/><rect x="75.1" y="0" width="1.3" height="14" fill="#3c5232" opacity=".55"/><rect x="79.0" y="0" width="1.3" height="14" fill="#3c5232" opacity=".55"/><rect x="82.9" y="0" width="1.3" height="14" fill="#3c5232" opacity=".55"/><rect x="86.8" y="0" width="1.3" height="14" fill="#3c5232" opacity=".55"/><rect x="90.7" y="0" width="1.3" height="14" fill="#3c5232" opacity=".55"/><rect x="94.6" y="0" width="1.3" height="14" fill="#3c5232" opacity=".55"/><rect x="98.5" y="0" width="1.3" height="14" fill="#3c5232" opacity=".55"/><rect x="102.4" y="0" width="1.3" height="14" fill="#3c5232" opacity=".55"/><rect x="106.3" y="0" width="1.3" height="14" fill="#3c5232" opacity=".55"/><rect x="110.2" y="0" width="1.3" height="14" fill="#3c5232" opacity=".55"/><rect x="114.1" y="0" width="1.3" height="14" fill="#3c5232" opacity=".55"/><path d="M1.0 21 L6.0 20 10.0 22 14.0 19.5 19.0 20.5 23.3 21 23.3 29 1.0 29Z" fill="#5a5030" opacity=".9"/><path d="M10.0 17.5 C12.0 14.5 16.0 14 19.0 16 L20.5 19 16.0 17 12.0 19.5Z" fill="#8fb0a8"/><path d="M3.0 23 L9.0 22 12.0 25 6.0 26Z" fill="#86783f" opacity=".8"/><path d="M24.3 21 L29.3 20 33.3 22 37.3 19.5 42.3 20.5 46.6 21 46.6 29 24.3 29Z" fill="#5a5030" opacity=".9"/><path d="M33.3 17.5 C35.3 14.5 39.3 14 42.3 16 L43.8 19 39.3 17 35.3 19.5Z" fill="#8fb0a8"/><path d="M26.3 23 L32.3 22 35.3 25 29.3 26Z" fill="#86783f" opacity=".8"/><path d="M47.6 21 L52.6 20 56.6 22 60.6 19.5 65.6 20.5 70.0 21 70.0 29 47.6 29Z" fill="#5a5030" opacity=".9"/><path d="M56.6 17.5 C58.6 14.5 62.6 14 65.6 16 L67.1 19 62.6 17 58.6 19.5Z" fill="#8fb0a8"/><path d="M49.6 23 L55.6 22 58.6 25 52.6 26Z" fill="#86783f" opacity=".8"/><path d="M71.0 21 L76.0 20 80.0 22 84.0 19.5 89.0 20.5 93.3 21 93.3 29 71.0 29Z" fill="#5a5030" opacity=".9"/><path d="M80.0 17.5 C82.0 14.5 86.0 14 89.0 16 L90.5 19 86.0 17 82.0 19.5Z" fill="#8fb0a8"/><path d="M73.0 23 L79.0 22 82.0 25 76.0 26Z" fill="#86783f" opacity=".8"/><path d="M94.3 21 L99.3 20 103.3 22 107.3 19.5 112.3 20.5 116.6 21 116.6 29 94.3 29Z" fill="#5a5030" opacity=".9"/><path d="M103.3 17.5 C105.3 14.5 109.3 14 112.3 16 L113.8 19 109.3 17 105.3 19.5Z" fill="#8fb0a8"/><path d="M96.3 23 L102.3 22 105.3 25 99.3 26Z" fill="#86783f" opacity=".8"/></svg></div>
<div class="abs" style="left:153.2px;top:445.3px;width:553.2px;height:15.6px;border-radius:3.5px;background:#bcbcfa;border:1px solid #9d9df0;overflow:hidden"><svg style="left:-1px;top:-1px" width="553.2" height="15.6" viewBox="0 0 553.2 15.6"><path d="M48 7.8 L48.0 6.7 L50.4 6.3 L52.9 7.1 L55.9 5.2 L59.7 5.5 L62.4 6.0 L65.1 6.8 L67.5 6.7 L71.6 5.4 L75.4 5.4 L78.0 6.5 L81.4 5.6 L85.3 5.3 L87.7 5.9 L91.3 6.1 L93.8 6.2 L96.2 5.1 L100.1 6.0 L102.9 5.2 L106.3 5.3 L110.2 6.1 L113.2 5.9 L116.3 6.8 L119.1 5.4 L121.4 7.1 L124.8 6.6 L128.1 6.2 L131.0 5.0 L133.6 6.3 L136.2 5.8 L138.9 6.4 L142.6 2.8 L146.6 6.7 L149.3 2.7 L152.0 3.4 L155.1 5.8 L159.1 2.6 L163.2 6.4 L167.3 3.0 L171.4 2.5 L174.2 3.0 L176.7 2.3 L179.5 6.7 L182.1 3.1 L184.8 5.4 L187.9 3.5 L190.2 2.7 L192.7 6.1 L195.4 3.4 L198.7 3.0 L202.8 3.3 L205.9 6.2 L208.5 2.4 L211.7 6.4 L214.4 3.3 L218.4 3.5 L222.4 2.2 L225.4 2.7 L229.2 2.9 L231.6 2.4 L235.6 3.1 L239.1 2.7 L242.9 2.7 L246.5 2.3 L250.6 5.4 L254.8 3.5 L258.7 5.4 L262.3 6.6 L265.8 2.6 L269.8 3.6 L273.9 5.6 L276.3 2.5 L280.2 2.4 L282.8 3.1 L286.8 2.9 L290.1 6.8 L293.5 2.4 L296.9 6.3 L300.6 3.6 L304.5 3.5 L307.8 2.5 L310.6 2.9 L314.7 6.6 L318.2 2.9 L321.2 2.5 L323.6 3.3 L326.4 3.0 L330.2 2.4 L332.7 2.9 L335.6 2.3 L339.2 6.4 L342.5 2.6 L345.7 6.5 L349.6 2.5 L353.8 2.7 L357.2 2.3 L360.3 3.2 L364.2 2.7 L367.3 2.5 L370.3 3.4 L372.6 2.5 L375.2 3.1 L378.5 2.7 L380.9 2.3 L383.5 3.1 L386.3 6.8 L390.4 2.5 L394.2 3.4 L397.6 2.8 L401.6 2.2 L404.1 2.7 L407.8 2.4 L410.6 3.0 L414.0 2.6 L416.8 3.1 L420.2 2.3 L423.2 2.5 L426.0 3.6 L428.6 2.6 L432.0 2.3 L435.4 3.5 L439.6 2.3 L443.0 3.5 L445.7 2.3 L449.7 3.4 L452.4 2.3 L454.9 2.6 L458.2 3.2 L461.4 3.5 L463.7 3.4 L466.0 3.2 L470.0 2.6 L473.5 2.4 L477.2 2.6 L480.8 2.9 L483.3 2.9 L485.7 2.4 L488.4 2.6 L492.3 3.1 L495.3 5.6 L497.6 3.4 L500.1 2.4 L502.8 2.9 L506.4 2.4 L510.6 2.3 L514.7 2.4 L518.5 3.4 L522.0 3.2 L525.5 2.8 L527.7 3.2 L531.6 3.2 L535.6 3.1 L539.5 2.3 L543.5 2.6 L546.9 2.2 L549.8 5.8 L552.2 7.8 L549.8 9.8 L546.9 13.4 L543.5 13.0 L539.5 13.3 L535.6 12.5 L531.6 12.4 L527.7 12.4 L525.5 12.8 L522.0 12.4 L518.5 12.2 L514.7 13.2 L510.6 13.3 L506.4 13.2 L502.8 12.7 L500.1 13.2 L497.6 12.2 L495.3 10.0 L492.3 12.5 L488.4 13.0 L485.7 13.2 L483.3 12.7 L480.8 12.7 L477.2 13.0 L473.5 13.2 L470.0 13.0 L466.0 12.4 L463.7 12.2 L461.4 12.1 L458.2 12.4 L454.9 13.0 L452.4 13.3 L449.7 12.2 L445.7 13.3 L443.0 12.1 L439.6 13.3 L435.4 12.1 L432.0 13.3 L428.6 13.0 L426.0 12.0 L423.2 13.1 L420.2 13.3 L416.8 12.5 L414.0 13.0 L410.6 12.6 L407.8 13.2 L404.1 12.9 L401.6 13.4 L397.6 12.8 L394.2 12.2 L390.4 13.1 L386.3 8.8 L383.5 12.5 L380.9 13.3 L378.5 12.9 L375.2 12.5 L372.6 13.1 L370.3 12.2 L367.3 13.1 L364.2 12.9 L360.3 12.4 L357.2 13.3 L353.8 12.9 L349.6 13.1 L345.7 9.1 L342.5 13.0 L339.2 9.2 L335.6 13.3 L332.7 12.7 L330.2 13.2 L326.4 12.6 L323.6 12.3 L321.2 13.1 L318.2 12.7 L314.7 9.0 L310.6 12.7 L307.8 13.1 L304.5 12.1 L300.6 12.0 L296.9 9.3 L293.5 13.2 L290.1 8.8 L286.8 12.7 L282.8 12.5 L280.2 13.2 L276.3 13.1 L273.9 10.0 L269.8 12.0 L265.8 13.0 L262.3 9.0 L258.7 10.2 L254.8 12.1 L250.6 10.2 L246.5 13.3 L242.9 12.9 L239.1 12.9 L235.6 12.5 L231.6 13.2 L229.2 12.7 L225.4 12.9 L222.4 13.4 L218.4 12.1 L214.4 12.3 L211.7 9.2 L208.5 13.2 L205.9 9.4 L202.8 12.3 L198.7 12.6 L195.4 12.2 L192.7 9.5 L190.2 12.9 L187.9 12.1 L184.8 10.2 L182.1 12.5 L179.5 8.9 L176.7 13.3 L174.2 12.6 L171.4 13.1 L167.3 12.6 L163.2 9.2 L159.1 13.0 L155.1 9.8 L152.0 12.2 L149.3 12.9 L146.6 8.9 L142.6 12.8 L138.9 9.2 L136.2 9.8 L133.6 9.3 L131.0 10.6 L128.1 9.4 L124.8 9.0 L121.4 8.5 L119.1 10.2 L116.3 8.8 L113.2 9.7 L110.2 9.5 L106.3 10.3 L102.9 10.4 L100.1 9.6 L96.2 10.5 L93.8 9.4 L91.3 9.5 L87.7 9.7 L85.3 10.3 L81.4 10.0 L78.0 9.1 L75.4 10.2 L71.6 10.2 L67.5 8.9 L65.1 8.8 L62.4 9.6 L59.7 10.1 L55.9 10.4 L52.9 8.5 L50.4 9.3 L48.0 8.9Z" fill="#a4a4ef"/></svg></div>
<svg style="left:160.3px;top:449.6px" width="6.6" height="7.2" viewBox="0 0 6.6 7.2"><path d="M2.2 5.8 V1.4 L6 .5 V4.9" fill="none" stroke="#3a3aa0" stroke-width=".85" stroke-linejoin="round"/><ellipse cx="1.4" cy="5.9" rx="1.2" ry="1" fill="#3a3aa0"/><ellipse cx="5.2" cy="5" rx="1.2" ry="1" fill="#3a3aa0"/></svg>
<div class="t" id="aud" style="left:171.7px;top:449.8px;font-size:7px;color:#32328c;transform:scaleX(.98);transform-origin:0 0">In the sky</div>
<div class="abs" style="left:513.9px;top:352px;width:1.5px;height:162.6px;background:#1f1f27"></div>
<svg style="left:509.7px;top:348.2px" width="10.2" height="10.6" viewBox="0 0 10.2 10.6"><path d="M2 0 H8.2 C9.3 0 10.2 .9 10.2 2 V5 C10.2 6.6 8.2 8.6 6.4 9.8 L5.9 10.6 H4.3 L3.8 9.8 C2 8.6 0 6.6 0 5 V2 C0 .9 .9 0 2 0Z" fill="#1f1f27"/></svg>
<div class="abs" style="left:809.5px;top:493px;width:73px;height:19.2px;border:1px solid #ececf1;border-radius:4px;background:#fff"></div>
<svg style="left:814.8px;top:498.6px" width="8.4" height="8.4" viewBox="0 0 8.4 8.4"><circle cx="3.4" cy="3.4" r="2.9" fill="none" stroke="#4a4a55" stroke-width=".8"/><path d="M5.5 5.5 L8 8 M2 3.4 H4.8" fill="none" stroke="#4a4a55" stroke-width=".8" stroke-linecap="round"/></svg>
<svg style="left:832.8px;top:498.6px" width="8.4" height="8.4" viewBox="0 0 8.4 8.4"><circle cx="3.4" cy="3.4" r="2.9" fill="none" stroke="#4a4a55" stroke-width=".8"/><path d="M5.5 5.5 L8 8 M2 3.4 H4.8 M3.4 2 V4.8" fill="none" stroke="#4a4a55" stroke-width=".8" stroke-linecap="round"/></svg>
<svg style="left:850.4px;top:499px" width="10.2" height="7.6" viewBox="0 0 10.2 7.6"><path d="M.5 .4 V7.2 M9.7 .4 V7.2 M2.4 3.8 H7.8 M3.6 2.6 L2.4 3.8 L3.6 5 M6.6 2.6 L7.8 3.8 L6.6 5" fill="none" stroke="#4a4a55" stroke-width=".8" stroke-linecap="round" stroke-linejoin="round"/></svg>
<svg style="left:868.8px;top:499.2px" width="9.8" height="7.4" viewBox="0 0 9.8 7.4"><rect x=".4" y=".4" width="9" height="6.6" rx="1.3" fill="none" stroke="#4a4a55" stroke-width=".8"/><path d="M.4 4.6 H9.4 M4.9 2.4 V5.2 M3.8 3.4 L4.9 2.3 L6 3.4" fill="none" stroke="#4a4a55" stroke-width=".75" stroke-linecap="round"/></svg>
<div class="abs" id="scrollstrip" style="left:226px;top:515.6px;width:290px;height:1.6px;background:#e9e9ee;border-radius:1px 1px 0 0"></div>
<!-- WATERMARK -->
<!-- IT box -->
<svg style="left:15.6px;top:435px" width="62" height="51" viewBox="0 0 62 51">
<path d="M2.6 0 H58 C59.6 0 60.7 1.1 60.7 2.6 V40.2 C60.7 41.8 59.6 42.9 58 42.9 H45.9 V49.8 L35.8 42.9 H2.6 C1.1 42.9 0 41.8 0 40.2 V2.6 C0 1.1 1.1 0 2.6 0Z" fill="#060606"/>
<rect x="10.6" y="5.6" width="11.6" height="31" fill="#fafafe"/>
<path d="M23.8 5.6 H52 V14 H43.5 V36.6 H32.3 V14 H23.8Z" fill="#fafafe"/>
</svg>
<!-- calligraphy -->
<svg style="left:80px;top:432px" width="62" height="52" viewBox="0 0 616 517">
<g fill="#060606" stroke="#060606" stroke-width="18" stroke-linejoin="round">
<path d="M84 82 C120 78 170 95 200 128 L188 142 C160 118 135 115 108 128 C118 108 104 92 84 82Z"/>
<path d="M60 162 C75 185 95 200 120 205 C150 208 172 205 190 214 C170 235 140 262 118 300 C108 325 118 350 150 372 C185 392 215 400 226 418 C205 440 180 458 160 466 C172 448 176 432 160 420 C130 400 100 385 92 350 C86 315 100 280 128 248 C105 250 88 240 76 222 C64 204 56 182 60 162Z"/>
<path d="M330 78 C345 86 350 100 340 115 C330 132 322 150 338 162 C360 176 395 178 425 190 L415 205 C380 200 330 200 300 180 C278 162 282 130 296 108 C305 94 316 84 330 78Z"/>
<path d="M385 58 C405 62 420 72 424 88 L420 135 C405 140 392 135 386 122Z"/>
<path d="M440 98 C475 100 515 84 540 62 C560 68 570 82 562 96 C545 118 500 140 462 142 C448 135 440 118 440 98Z"/>
<path d="M528 110 L548 128 C500 190 420 248 335 268 L326 252 C400 225 470 172 528 110Z"/>
<path d="M350 282 C385 270 420 262 452 268 L445 290 C410 290 380 298 355 310Z"/>
<path d="M395 300 C420 320 445 350 450 385 C454 420 440 450 405 470 C390 468 378 462 370 452 C400 440 415 415 410 385 C405 355 390 330 372 312Z"/>
<path d="M330 345 C350 335 375 332 395 338 L388 358 C368 356 350 362 338 372Z"/>
<path d="M318 378 C345 385 372 382 392 372 L398 392 C375 410 345 415 325 405Z"/>
<path d="M438 300 C462 310 482 330 490 360 C494 390 486 425 470 455 C462 440 462 420 466 400 C470 370 460 340 440 322Z"/>
<path d="M520 228 C540 248 560 282 572 322 C555 335 532 345 515 350 C530 322 534 290 522 262Z"/>
</g>
</svg>
<div class="t" id="wmurl" style="left:15.4px;top:491.6px;font-size:15px;font-weight:bold;color:#0a0a0a">www.ithome.com</div>
</body>
</html>
